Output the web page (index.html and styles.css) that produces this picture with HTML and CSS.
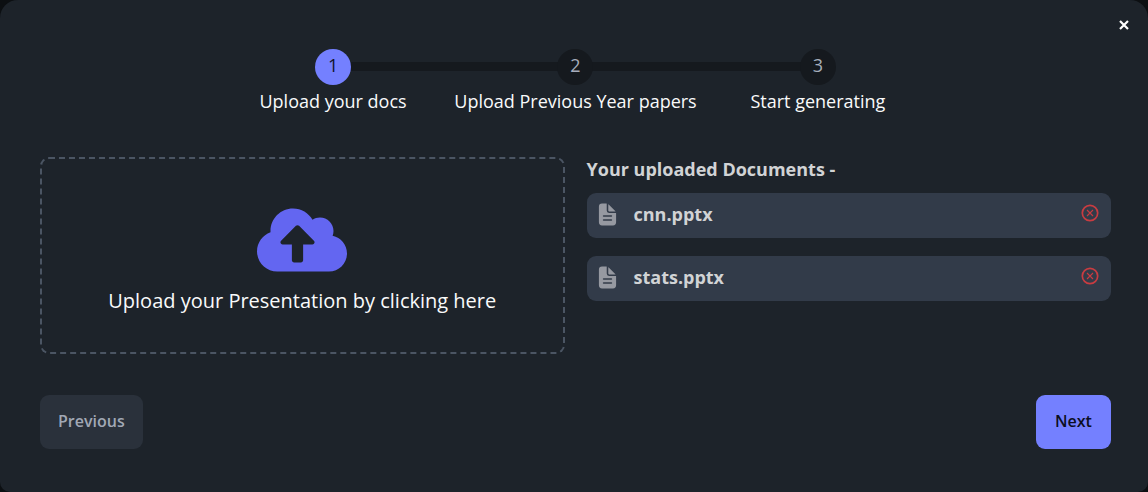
FILE: index.html
```html
<!DOCTYPE html>
<html lang="en">
<head>
<meta charset="utf-8">
<meta name="viewport" content="width=device-width, initial-scale=1">
<title>Upload your docs</title>
<link rel="stylesheet" href="styles.css">
</head>
<body>
<svg class="sprite" aria-hidden="true">
  <symbol id="icon-doc" viewBox="0 0 512 512">
    <path d="M428 224H288a48 48 0 01-48-48V36a4 4 0 00-4-4h-92a64 64 0 00-64 64v320a64 64 0 0064 64h224a64 64 0 0064-64V228a4 4 0 00-4-4zm-92 160H176a16 16 0 010-32h160a16 16 0 010 32zm0-80H176a16 16 0 010-32h160a16 16 0 010 32z"/>
    <path d="M419.22 188.59L275.41 44.78a2 2 0 00-3.41 1.41V176a16 16 0 0016 16h129.81a2 2 0 001.41-3.41z"/>
  </symbol>
  <symbol id="icon-remove" viewBox="0 0 18 18">
    <circle cx="9" cy="9" r="7.7" fill="none" stroke="currentColor" stroke-width="1.7"/>
    <path d="M6 6l6 6M12 6l-6 6" fill="none" stroke="currentColor" stroke-width="1.1"/>
  </symbol>
</svg>
<main class="modal" role="dialog" aria-label="Upload documents">
  <button class="close" type="button" aria-label="Close">
    <svg viewBox="0 0 10 10"><path d="M1 1l8 8M9 1l-8 8" fill="none" stroke="currentColor" stroke-width="2.2"/></svg>
  </button>
  <ol class="steps">
    <li class="step step-active"><span class="dot">1</span><span>Upload your docs</span></li>
    <li class="step"><span class="dot">2</span><span>Upload Previous Year papers</span></li>
    <li class="step"><span class="dot">3</span><span>Start generating</span></li>
  </ol>
  <div class="content">
    <label class="dropzone">
      <input class="file-input" type="file">
      <svg class="cloud" viewBox="0 0 640 512" aria-hidden="true"><path d="M537.6 226.6c4.1-10.7 6.4-22.4 6.4-34.6 0-53-43-96-96-96-19.7 0-38.1 6-53.3 16.2C367 64.2 315.3 32 256 32c-88.4 0-160 71.6-160 160 0 2.7.1 5.4.2 8.1C40.2 219.8 0 273.2 0 336c0 79.5 64.5 144 144 144h368c70.7 0 128-57.3 128-128 0-61.9-44-113.6-102.4-125.4zM393.4 288H328v112c0 8.8-7.2 16-16 16h-48c-8.8 0-16-7.2-16-16V288h-65.4c-14.3 0-21.4-17.2-11.3-27.4l105.4-105.4c6.2-6.2 16.4-6.2 22.6 0l105.4 105.4c10.1 10.1 2.9 27.4-11.3 27.4z"/></svg>
      <span>Upload your Presentation by clicking here</span>
    </label>
    <section class="documents">
      <h2 class="heading">Your uploaded Documents -</h2>
      <ul class="files">
        <li class="file">
          <svg class="doc" aria-hidden="true"><use href="#icon-doc"/></svg>
          <span class="name">cnn.pptx</span>
          <button class="remove" type="button" aria-label="Remove cnn.pptx"><svg><use href="#icon-remove"/></svg></button>
        </li>
        <li class="file">
          <svg class="doc" aria-hidden="true"><use href="#icon-doc"/></svg>
          <span class="name">stats.pptx</span>
          <button class="remove" type="button" aria-label="Remove stats.pptx"><svg><use href="#icon-remove"/></svg></button>
        </li>
      </ul>
    </section>
  </div>
  <div class="actions">
    <button class="btn btn-previous" type="button">Previous</button>
    <button class="btn btn-next" type="button">Next</button>
  </div>
</main>
</body>
</html>
```
FILE: styles.css
```css
* {
  box-sizing: border-box;
}

body {
  margin: 0;
  background: #0c0f12;
  color: #f9fafb;
  font-family: "Open Sans", "Noto Sans", sans-serif;
  font-size: 18px;
  line-height: 24px;
}

button {
  border: 0;
  padding: 0;
  background: none;
  color: inherit;
  font: inherit;
  cursor: pointer;
}

svg {
  display: block;
  fill: currentColor;
}

ol,
ul {
  margin: 0;
  padding: 0;
  list-style: none;
}

.sprite {
  position: absolute;
  width: 0;
  height: 0;
}

.modal {
  position: relative;
  min-height: 100vh;
  padding: 49px 37px 43px 40px;
  border-radius: 18px 18px 10px 10px;
  background: #1d232a;
}

.close {
  position: absolute;
  top: 16px;
  right: 15px;
  padding: 4px;
  color: #fff;
}

.close svg {
  width: 10px;
  height: 10px;
}

.steps {
  display: grid;
  grid-template-columns: repeat(3, 1fr);
  width: fit-content;
  margin: 0 auto;
  text-align: center;
}

.step {
  position: relative;
  display: flex;
  flex-direction: column;
  align-items: center;
  gap: 4px;
  white-space: nowrap;
}

.step + .step::before {
  content: "";
  position: absolute;
  top: 13px;
  right: 50%;
  width: 100%;
  height: 9px;
  background: #15191e;
}

.dot {
  position: relative;
  z-index: 1;
  width: 36px;
  height: 36px;
  border-radius: 50%;
  background: #15191e;
  color: #a6adbb;
  line-height: 32px;
}

.step-active .dot {
  z-index: 2;
  background: #7480ff;
  color: #11142b;
}

.content {
  display: grid;
  grid-template-columns: 1fr 1fr;
  gap: 22px;
  margin-top: 44px;
}

.dropzone {
  display: flex;
  flex-direction: column;
  align-items: center;
  gap: 8px;
  padding: 45px 16px 34px;
  border: 2px dashed #4b5563;
  border-radius: 9px;
  font-size: 20px;
  line-height: 34px;
  cursor: pointer;
}

.file-input {
  position: absolute;
  width: 1px;
  height: 1px;
  opacity: 0;
}

.cloud {
  width: 90px;
  height: 72px;
  color: #6366f1;
}

.heading {
  margin: 0 0 12px;
  color: #d1d3d5;
  font-size: 18px;
  font-weight: 700;
}

.files {
  display: grid;
  gap: 18px;
}

.file {
  display: flex;
  align-items: center;
  height: 45px;
  padding: 0 12px 3px 8px;
  border-radius: 9px;
  background: #323b49;
}

.doc {
  width: 25px;
  height: 25px;
  color: #9699a1;
}

.name {
  flex: 1;
  margin-left: 14px;
  color: #d1d3d5;
  font-weight: 700;
}

.remove {
  padding-bottom: 2px;
  color: #c93c41;
}

.remove svg {
  width: 18px;
  height: 18px;
}

.actions {
  display: flex;
  justify-content: space-between;
  margin-top: 41px;
}

.btn {
  height: 54px;
  padding: 0 18px 2px;
  border-radius: 9px;
  font-size: 16px;
  font-weight: 600;
}

.btn-previous {
  background: #2a313b;
  color: #a1a8b5;
}

.btn-next {
  min-width: 75px;
  background: #7480ff;
  color: #0b0e22;
}
```
